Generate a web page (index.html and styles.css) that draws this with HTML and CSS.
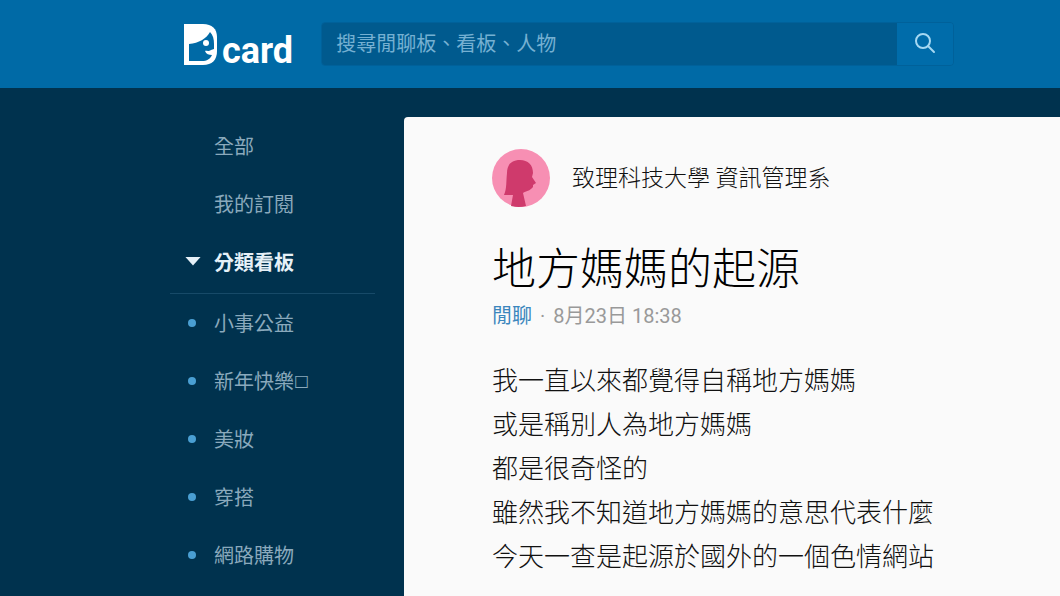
FILE: index.html
```
<!DOCTYPE html>
<html lang="zh-Hant">
<head>
  <meta charset="UTF-8">
  <title>地方媽媽的起源 - Dcard</title>
  <meta name="viewport" content="width=device-width, initial-scale=1">
  <link rel="stylesheet" href="styles.css">
</head>
<body>

<header class="header">
  <a class="logo" href="#" aria-label="Dcard">
    <svg class="logo-mark" viewBox="0 0 34 41" width="34" height="41" aria-hidden="true">
      <path fill="#fff" d="M0 0H19C28 0 33 5 33 13V27C33 36 28 41 19 41H0Z"/>
      <path fill="#006aa6" d="M5 20C15 19 22 15 26 8C29 11 30 15 30 20V25L27 26C24 28 22 26 21 27C22 30 25 31 28 31C26 35 23 37 18 37H5Z"/>
      <circle cx="22" cy="19" r="3" fill="#fff"/>
    </svg>
    <span class="logo-text">card</span>
  </a>
  <form class="search">
    <input class="search-input" type="text" placeholder="搜尋閒聊板、看板、人物" aria-label="搜尋">
    <button class="search-btn" type="button" aria-label="搜尋">
      <svg viewBox="0 0 22 22" width="22" height="22" aria-hidden="true">
        <circle cx="9" cy="8" r="7" fill="none" stroke="#a5d8f2" stroke-width="2"/>
        <path d="M14 13L20 19" stroke="#a5d8f2" stroke-width="2" stroke-linecap="round"/>
      </svg>
    </button>
  </form>
</header>

<div class="container">
  <nav class="sidebar">
    <ul class="menu">
      <li><a class="menu-link" href="#">全部</a></li>
      <li><a class="menu-link" href="#">我的訂閱</a></li>
      <li><a class="menu-link open" href="#">分類看板</a></li>
    </ul>
    <ul class="menu boards">
      <li><a class="menu-link board" href="#">小事公益</a></li>
      <li><a class="menu-link board" href="#">新年快樂<span class="tofu">□</span></a></li>
      <li><a class="menu-link board" href="#">美妝</a></li>
      <li><a class="menu-link board" href="#">穿搭</a></li>
      <li><a class="menu-link board" href="#">網路購物</a></li>
    </ul>
  </nav>

  <main class="post">
    <div class="author">
      <svg class="avatar" viewBox="0 0 58 58" width="58" height="58" aria-hidden="true">
        <circle cx="29" cy="29" r="29" fill="#f78fb3"/>
        <path fill="#cf3a6c" d="M12 46C15 39 14 33 15 24C15 15 20 11 28 11C36 11 41 16 41 24L40 28L44 34L41 36V38C38 42 34 42 31 44L34 57Q27 59 19 57L21 46Z"/>
      </svg>
      <span class="school">致理科技大學 資訊管理系</span>
    </div>
    <h1 class="title">地方媽媽的起源</h1>
    <div class="meta"><a class="forum" href="#">閒聊</a><span class="dot">·</span>8月23日 18:38</div>
    <div class="content">
      <p>我一直以來都覺得自稱地方媽媽</p>
      <p>或是稱別人為地方媽媽</p>
      <p>都是很奇怪的</p>
      <p>雖然我不知道地方媽媽的意思代表什麼</p>
      <p>今天一查是起源於國外的一個色情網站</p>
    </div>
  </main>
</div>

</body>
</html>
```
FILE: styles.css
```
:root {
  --header: #006aa6;
  --field: #005a8e;
  --bg: #00324e;
  --paper: #fafafa;
  --link: #3b86bd;
}

* {
  box-sizing: border-box;
}

body {
  margin: 0;
  min-height: 100vh;
  display: flex;
  flex-direction: column;
  background: var(--bg);
  font-family: Roboto, "Noto Sans CJK TC", sans-serif;
  overflow: hidden;
}

a {
  color: inherit;
  text-decoration: none;
}

.header {
  display: flex;
  align-items: center;
  gap: 28px;
  height: 88px;
  padding: 0 106px 0 184px;
  background: var(--header);
}

.logo {
  display: flex;
  align-items: flex-end;
  gap: 4px;
  color: #fff;
}

.logo-text {
  font-size: 36px;
  font-weight: 700;
  line-height: 28px;
}

.search {
  flex: 1;
  display: flex;
  height: 44px;
  border: 1px solid #00619a;
  border-radius: 4px;
  overflow: hidden;
}

.search-input {
  flex: 1;
  min-width: 0;
  padding: 0 14px;
  border: 0;
  background: var(--field);
  color: #fff;
  font-family: inherit;
  font-size: 20px;
}

.search-input::placeholder {
  color: #75b0d2;
}

.search-btn {
  display: flex;
  align-items: center;
  justify-content: center;
  width: 56px;
  padding: 0;
  border: 0;
  background: #006caa;
  cursor: pointer;
}

.container {
  flex: 1;
  display: flex;
  gap: 29px;
  padding: 29px 0 0 170px;
}

.sidebar {
  width: 205px;
}

.menu {
  margin: 0;
  padding: 0;
  list-style: none;
}

.boards {
  margin-top: 2px;
  border-top: 1px solid #174a68;
}

.menu-link {
  display: flex;
  align-items: center;
  height: 58px;
  padding-bottom: 2px;
  color: #8aa9bc;
  font-size: 20px;
}

.menu-link::before {
  content: "";
  flex: none;
  width: 8px;
  height: 8px;
  margin: 2px 18px 0;
}

.menu-link.open {
  color: #e6f1f8;
  font-weight: 700;
}

.menu-link.open::before {
  width: 16px;
  height: 9px;
  margin: 0 13px 0 15px;
  background: #e6f1f8;
  clip-path: polygon(0 0, 100% 0, 50% 100%);
}

.board::before {
  border-radius: 50%;
  background: #4a9fd3;
}

.tofu {
  font-family: "DejaVu Sans", sans-serif;
  font-size: 16px;
}

.post {
  flex: 1;
  padding: 32px 88px 0;
  background: var(--paper);
  border-radius: 4px 0 0 0;
  color: #111;
  font-weight: 300;
}

.author {
  display: flex;
  align-items: center;
  gap: 22px;
}

.school {
  padding-bottom: 4px;
  font-size: 23px;
}

.title {
  margin: 32px 0 0;
  color: #000;
  font-size: 44px;
  font-weight: 300;
  line-height: 62px;
}

.meta {
  color: #999;
  font-size: 20px;
  font-weight: 400;
  line-height: 30px;
}

.forum {
  color: var(--link);
}

.dot {
  margin: 0 8px;
}

.content {
  margin-top: 28px;
  font-size: 26px;
  line-height: 44px;
}

.content p {
  margin: 0;
}
```
